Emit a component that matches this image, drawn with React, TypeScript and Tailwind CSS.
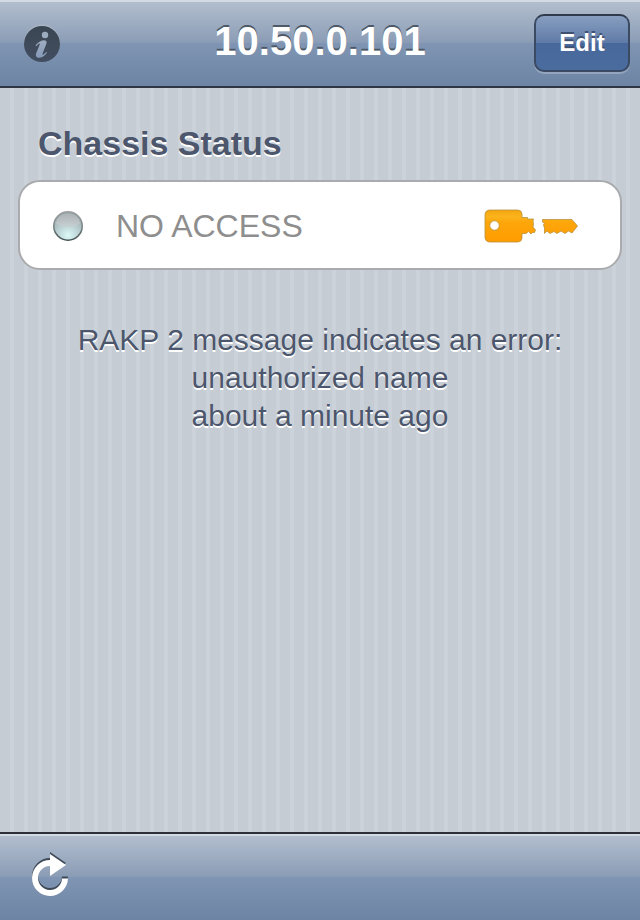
const BAR =
  "bg-[linear-gradient(to_bottom,#d3dae3_0,#d3dae3_2px,#b2bece_2px,#8a9cb5_50%,#7f95b3_50%,#6e84a4_100%)]";

function InfoIcon() {
  return (
    <svg viewBox="0 0 36 38" className="h-[38px] w-9" aria-hidden="true">
      <defs>
        <linearGradient id="info-disc" x1="0" y1="0" x2="0" y2="1">
          <stop offset="0" stopColor="#3b4653" />
          <stop offset="1" stopColor="#424e61" />
        </linearGradient>
        <linearGradient id="info-mark" x1="0" y1="0" x2="0" y2="1">
          <stop offset="0" stopColor="#9eacc0" />
          <stop offset="1" stopColor="#869bb9" />
        </linearGradient>
      </defs>
      <circle cx="18" cy="18.5" r="18" fill="#a9b5c4" />
      <circle cx="18" cy="20" r="18" fill="url(#info-disc)" />
      <circle cx="21" cy="11" r="3.2" fill="#9eacc0" />
      <path
        d="M11.500 21.500C13.500 18.600 16.500 16.400 19.500 16.200C22.300 16.100 23.200 17.600 22.300 20L18.600 29.500C18.200 30.800 18.800 31 19.800 30.300C20.700 29.700 21.400 28.900 22.100 27.900L23 28.500C21.200 31.500 18.400 33.600 15.400 33.700C12.200 33.700 11.200 31.700 12.300 28.900L15.700 20.600C16.100 19.500 15.500 19.200 14.800 19.700C14 20.200 13.300 21.200 12.400 22.300Z"
        fill="url(#info-mark)"
      />
    </svg>
  );
}

function StatusLight() {
  return (
    <svg viewBox="0 0 32 32" className="h-8 w-8" role="img" aria-label="Status light off">
      <defs>
        <linearGradient id="light-rim" x1="0" y1="0" x2="0" y2="1">
          <stop offset="0" stopColor="#a0a0a0" />
          <stop offset="0.5" stopColor="#7c8585" />
          <stop offset="1" stopColor="#3f4d4d" />
        </linearGradient>
        <radialGradient id="light-body" cx="0.5" cy="0.85" r="0.85">
          <stop offset="0" stopColor="#dcf8f7" />
          <stop offset="0.5" stopColor="#b9cfd1" />
          <stop offset="1" stopColor="#95a3a6" />
        </radialGradient>
        <linearGradient id="light-gloss" x1="0" y1="0" x2="0" y2="1">
          <stop offset="0" stopColor="#b3b5b7" />
          <stop offset="1" stopColor="#c9cfd2" />
        </linearGradient>
      </defs>
      <circle cx="16" cy="16" r="15" fill="url(#light-rim)" />
      <circle cx="16" cy="16" r="13.5" fill="url(#light-body)" />
      <path
        d="M4 13.5C5 7 10 3.5 16 3.5S27 7 28 13.5C25 16 20 17 16 17S7 16 4 13.5Z"
        fill="url(#light-gloss)"
        opacity="0.8"
      />
    </svg>
  );
}

function BrokenKey() {
  return (
    <svg viewBox="0 0 96 34" className="h-[34px] w-24" role="img" aria-label="Broken key">
      <defs>
        <linearGradient id="key-gold" gradientUnits="userSpaceOnUse" x1="0" y1="0" x2="0" y2="34">
          <stop offset="0" stopColor="#f3a20c" />
          <stop offset="0.22" stopColor="#fbb41c" />
          <stop offset="0.4" stopColor="#fda60a" />
          <stop offset="1" stopColor="#ff9b00" />
        </linearGradient>
      </defs>
      <g fill="url(#key-gold)" stroke="#b9923f" strokeWidth="0.8" strokeLinejoin="round">
        <path
          fillRule="evenodd"
          d="M5 1H34Q38 1.500 38 5V8.500H43.500V10H49.500L49 12L49.500 15L49 18L51.500 21L50.500 23.500L48.500 23.500L47 25L44.500 22.500L42 24.500H38V29Q38 32.500 34 33H5Q1.500 32.500 1 29V5Q1.500 1.500 5 1ZM10.500 11.800a4.700 4.700 0 1 0 0 9.400a4.700 4.700 0 1 0 0-9.400Z"
        />
        <path d="M58.500 10.500H88L93.500 17L88 24L84.500 22L81 24.500L77 22L73 24.500L70 22.500L66 24.500L63 22L60.500 24.500V19L59.500 16L60.500 14L58.500 13Z" />
      </g>
    </svg>
  );
}

function RefreshIcon() {
  return (
    <svg viewBox="0 0 36 46" className="h-[46px] w-9" aria-hidden="true">
      <g fill="#3d4856">
        <path d="M18 0L34 11L18 22Z" />
        <path d="M18 6A18 18 0 1 0 36 24.500H30A12 12 0 1 1 18 12Z" />
      </g>
      <g fill="#fff">
        <path d="M18 2L34 13L18 24Z" />
        <path d="M18 8A18 18 0 1 0 36 26.500H30A12 12 0 1 1 18 14Z" />
      </g>
    </svg>
  );
}

export default function App() {
  return (
    <div className="flex min-h-screen flex-col bg-[#c5ccd4] bg-[repeating-linear-gradient(to_right,#c5ccd4_0,#c5ccd4_10px,#cbd2d9_10px,#cbd2d9_14px)] font-['Liberation_Sans',Arial,sans-serif]">
      <header
        className={`grid h-[88px] grid-cols-[1fr_auto_1fr] items-center border-b-2 border-[#2d3642] px-2.5 ${BAR}`}
      >
        <button type="button" aria-label="Info" className="justify-self-start pl-3.5">
          <InfoIcon />
        </button>
        <h1 className="pb-1 text-[40px] leading-12 font-bold text-white [text-shadow:0_-2px_0_#4d5967]">
          10.50.0.101
        </h1>
        <button
          type="button"
          className="h-[58px] w-24 justify-self-end rounded-[10px] border-2 border-[#3a4a63] border-t-[#2f3b4c] bg-[linear-gradient(to_bottom,#8ba1c2_0,#5e7aa6_50%,#48689b_50%,#4a6c9f_100%)] bg-origin-border text-2xl font-bold text-white shadow-[0_2px_0_#93a5bf] [text-shadow:0_-2px_0_#3d5070]"
        >
          Edit
        </button>
      </header>

      <main className="flex-1 px-[18px] pt-[35px]">
        <section>
          <h2 className="px-5 text-[34px] leading-10 font-bold text-[#4c566c] [text-shadow:0_2px_0_#fff]">
            Chassis Status
          </h2>
          <div className="mt-[17px] flex h-[90px] items-center rounded-[22px] border-2 border-[#a9abae] bg-white pt-0.5 pr-10 pl-8">
            <StatusLight />
            <span className="ml-8 flex-1 text-[32px] leading-10 text-[#8e8e8e]">NO ACCESS</span>
            <BrokenKey />
          </div>
        </section>
        <p className="mx-auto mt-[51px] max-w-[520px] text-center text-[30px] leading-[38px] text-[#4c566c] [text-shadow:0_2px_0_#fff]">
          RAKP 2 message indicates an error: unauthorized name
          <br />
          about a minute ago
        </p>
      </main>

      <footer className={`flex h-[88px] items-center border-t-2 border-[#2d3038] px-8 pb-1 ${BAR}`}>
        <button type="button" aria-label="Refresh">
          <RefreshIcon />
        </button>
      </footer>
    </div>
  );
}
